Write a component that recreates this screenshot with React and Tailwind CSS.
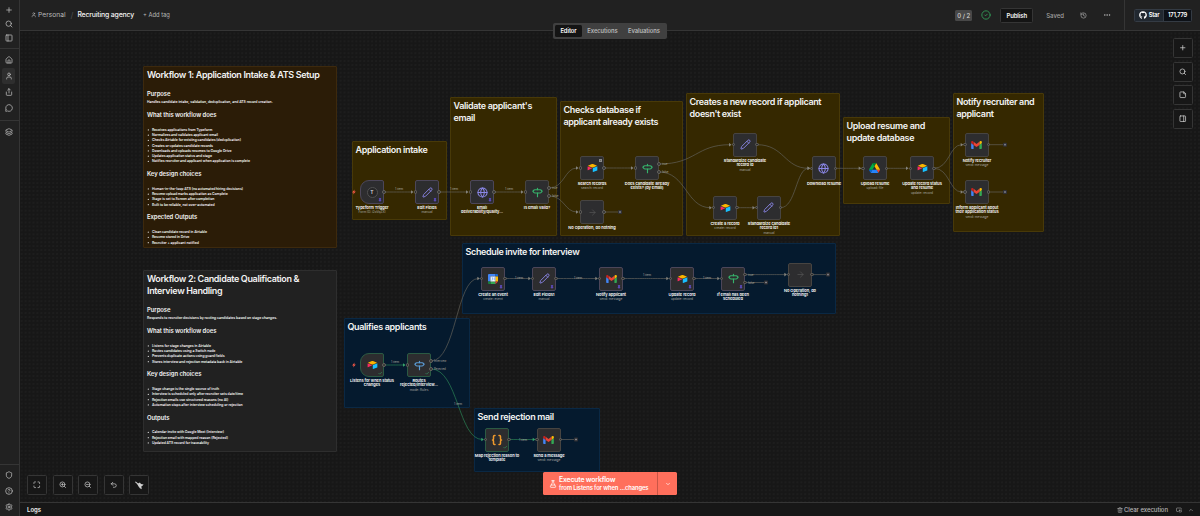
import React from "react";
import {
  Plus, Search, PanelLeft, PanelRight, House, User, Share, MessageCircle, Layers, Shield,
  CircleHelp, Settings, CircleCheck, History, Ellipsis, StickyNote, Maximize, ZoomIn,
  ZoomOut, Undo2, Trash2, ChevronDown, ChevronUp, FlaskConical, Globe, Pencil, Signpost,
  ArrowRight, Braces, Check, Pin, PictureInPicture2,
} from "lucide-react";
import { FaGithub } from "react-icons/fa";

/* ------------------ Data ------------------ */
const docs = [
  {
    title: "Workflow 1: Application Intake & ATS Setup",
    box: { left: 143, top: 65.5, width: 194, height: 182 },
    tone: "bg-[#2b1c07] border-[#3d290d]",
    purpose: "Handles candidate intake, validation, deduplication, and ATS record creation.",
    sections: [
      ["What this workflow does", [
        "Receives applications from Typeform",
        "Normalizes and validates applicant email",
        "Checks Airtable for existing candidates (deduplication)",
        "Creates or updates candidate records",
        "Downloads and uploads resumes to Google Drive",
        "Updates application status and stage",
        "Notifies recruiter and applicant when application is complete",
      ]],
      ["Key design choices", [
        "Human-in-the-loop ATS (no automated hiring decisions)",
        "Resume upload marks application as Complete",
        "Stage is set to Screen after completion",
        "Built to be reliable, not over-automated",
      ]],
      ["Expected Outputs", [
        "Clean candidate record in Airtable",
        "Resume stored in Drive",
        "Recruiter + applicant notified",
      ]],
    ],
  },
  {
    title: "Workflow 2: Candidate Qualification & Interview Handling",
    box: { left: 143, top: 270, width: 194, height: 182 },
    tone: "bg-[#212121] border-[#2e2e2e]",
    purpose: "Responds to recruiter decisions by routing candidates based on stage changes.",
    sections: [
      ["What this workflow does", [
        "Listens for stage changes in Airtable",
        "Routes candidates using a Switch node",
        "Prevents duplicate actions using guard fields",
        "Stores interview and rejection metadata back in Airtable",
      ]],
      ["Key design choices", [
        "Stage change is the single source of truth",
        "Interview is scheduled only after recruiter sets date/time",
        "Rejection emails use structured reasons (no AI)",
        "Automation stops after interview scheduling or rejection",
      ]],
      ["Outputs", [
        "Calendar invite with Google Meet (Interview)",
        "Rejection email with mapped reason (Rejected)",
        "Updated ATS record for traceability",
      ]],
    ],
  },
];

const YELLOW = "bg-[#352800] border-[#483908]";
const BLUE = "bg-[#051a2e] border-[#0a2844]";

const groups = [
  { title: ["Application intake"], x: 352, y: 140.5, w: 95, h: 79.5, tone: YELLOW },
  { title: ["Validate applicant's", "email"], x: 450, y: 97, w: 107, h: 139, tone: YELLOW },
  { title: ["Checks database if", "applicant already exists"], x: 560, y: 101, w: 122.5, h: 135, tone: YELLOW },
  { title: ["Creates a new record if applicant", "doesn't exist"], x: 686, y: 93, w: 154, h: 142.5, tone: YELLOW },
  { title: ["Upload resume and", "update database"], x: 843, y: 117, w: 107, h: 87, tone: YELLOW },
  { title: ["Notify recruiter and", "applicant"], x: 953, y: 93, w: 91, h: 139, tone: YELLOW },
  { title: ["Schedule invite for interview"], x: 462, y: 243, w: 374, h: 71, tone: BLUE },
  { title: ["Qualifies applicants"], x: 344, y: 317.5, w: 126, h: 90.5, tone: BLUE },
  { title: ["Send rejection mail"], x: 473.5, y: 408, w: 126.5, h: 64, tone: BLUE },
];

const nodes = [
  { x: 360, y: 180, icon: "typeform", label: ["Typeform Trigger"], sub: "Form ID: i2oVqZXl", trigger: true, pin: true },
  { x: 415, y: 180, icon: "pencil", label: ["Edit Fields"], sub: "manual", pin: true },
  { x: 470, y: 180, icon: "globe", label: ["Email", "deliverability/quality..."], pin: true },
  { x: 525, y: 180, icon: "sign", label: ["Is email valid?"], outs: ["true", "false"] },
  { x: 580, y: 156, icon: "airtable", label: ["Search records"], sub: "search: record", note: true },
  { x: 635, y: 156, icon: "sign", label: ["Does candidate already", "exists? (by email)"], outs: ["true", "false"] },
  { x: 580, y: 200, icon: "arrow", label: ["No Operation, do nothing"], end: 620 },
  { x: 733, y: 132.7, icon: "pencil", label: ["Standardize candidate", "record id"], sub: "manual" },
  { x: 713.3, y: 195.7, icon: "airtable", label: ["Create a record"], sub: "create: record" },
  { x: 756.5, y: 195.7, icon: "pencil", label: ["Standardize candidate", "record id1"], sub: "manual" },
  { x: 811.5, y: 156.3, icon: "globe", label: ["Download resume"] },
  { x: 862.7, y: 156.3, icon: "drive", label: ["Upload resume"], sub: "upload: file" },
  { x: 910, y: 156.3, icon: "airtable", label: ["Update record status", "and resume"], sub: "update: record" },
  { x: 964.7, y: 132.7, icon: "gmail", label: ["Notify recruiter"], sub: "send: message", end: 1005 },
  { x: 964.7, y: 180, icon: "gmail", label: ["Inform applicant about", "their application status"], sub: "send: message", end: 1005 },
  { x: 481.3, y: 266.5, icon: "calendar", label: ["Create an event"], sub: "create: event", pin: true },
  { x: 532.3, y: 266.5, icon: "pencil", label: ["Edit Fields1"], sub: "manual", pin: true },
  { x: 599.3, y: 266.5, icon: "gmail", label: ["Notify applicant"], sub: "send: message", pin: true },
  { x: 670.3, y: 266.5, icon: "airtable", label: ["Update record"], sub: "update: record", pin: true },
  { x: 721.3, y: 266.5, icon: "sign", label: ["If email has been", "scheduled"], outs: ["true", "false"], pin: true },
  { x: 788.3, y: 262.6, icon: "arrow", label: ["No Operation, do", "nothing1"], end: 828 },
  { x: 360, y: 353, icon: "airtable", label: ["Listens for when status", "changes"], trigger: true, done: true },
  { x: 407, y: 353, icon: "switch", label: ["Routes", "rejected/interview..."], sub: "mode: Rules", outs: ["Interview", "Rejected"], done: true },
  { x: 485.3, y: 427.5, icon: "code", label: ["Map rejection reason to", "template"], done: true },
  { x: 536.7, y: 427.5, icon: "gmail", label: ["Send a message"], sub: "send: message", end: 576 },
];

// [x1, y1, x2, y2, ran]
const wires = [
  [384, 192, 415, 192], [439, 192, 470, 192], [494, 192, 525, 192],
  [549, 188, 580, 168], [549, 196, 580, 212],
  [604, 168, 635, 168],
  [659, 164, 733, 144.7], [659, 172, 713.3, 207.7],
  [757, 144.7, 811.5, 168.3], [737.3, 207.7, 756.5, 207.7], [780.5, 207.7, 811.5, 168.3],
  [835.5, 168.3, 862.7, 168.3], [886.7, 168.3, 910, 168.3],
  [934, 168.3, 964.7, 144.7], [934, 168.3, 964.7, 192],
  [505.3, 278.5, 532.3, 278.5], [556.3, 278.5, 599.3, 278.5], [623.3, 278.5, 670.3, 278.5],
  [694.3, 278.5, 721.3, 278.5], [745.3, 274.6, 788.3, 274.6],
  [431, 361, 481.3, 278.5],
  [384, 365, 407, 365, true], [431, 369, 485.3, 439.5, true], [509.3, 439.5, 536.7, 439.5, true],
];

const itemLabels = [
  [399, 188.5], [454, 188.5], [509, 188.5], [519, 278], [578, 278], [647, 275],
  [707, 278], [395, 361.5], [458, 404], [523, 439.5],
];

/* ------------------ Icons ------------------ */
function Airtable() {
  return (
    <svg viewBox="0 0 200 170" className="w-[11px] h-[10px]">
      <path fill="#FCB400" d="M90.04 12.37 24.08 39.66c-3.67 1.52-3.63 6.73.06 8.19l66.24 26.27a24.58 24.58 0 0 0 18.12 0l66.23-26.27c3.7-1.46 3.73-6.67.07-8.19l-65.96-27.29a24.58 24.58 0 0 0-18.8 0" />
      <path fill="#18BFFF" d="M105.31 88.46v65.62c0 3.12 3.15 5.26 6.05 4.1l73.8-28.64a4.42 4.42 0 0 0 2.8-4.11V59.81c0-3.12-3.15-5.26-6.05-4.1l-73.8 28.64a4.42 4.42 0 0 0-2.8 4.11" />
      <path fill="#F82B60" d="m88.08 91.85-21.9 10.57-2.23 1.08-46.24 22.15c-2.93 1.42-6.67-.72-6.67-3.98V60.09c0-1.18.6-2.2 1.41-2.96.34-.34.72-.62 1.12-.84 1.1-.66 2.68-.84 4.02-.31l70.12 27.78c3.56 1.41 3.84 6.4.37 8.09" />
    </svg>
  );
}

function Gmail() {
  return (
    <svg viewBox="52 42 88 66" className="w-[11px] h-[8px]">
      <path fill="#4285f4" d="M58 108h14V74L52 59v43c0 3.32 2.69 6 6 6" />
      <path fill="#34a853" d="M120 108h14c3.32 0 6-2.69 6-6V59l-20 15" />
      <path fill="#fbbc04" d="M120 48v26l20-15v-8c0-7.42-8.47-11.65-14.4-7.2" />
      <path fill="#ea4335" d="M72 74V48l24 18 24-18v26L96 92" />
      <path fill="#c5221f" d="M52 51v8l20 15V48l-5.6-4.2c-5.94-4.45-14.4-.22-14.4 7.2" />
    </svg>
  );
}

function Drive() {
  return (
    <svg viewBox="0 0 87.3 78" className="w-[11px] h-[10px]">
      <path fill="#0066da" d="m6.6 66.85 3.85 6.65c.8 1.4 1.95 2.5 3.3 3.3L27.5 53H0c0 1.55.4 3.1 1.2 4.5z" />
      <path fill="#00ac47" d="M43.65 25 29.9 1.2c-1.35.8-2.5 1.9-3.3 3.3l-25.4 44A9.06 9.06 0 0 0 0 53h27.5z" />
      <path fill="#ea4335" d="M73.55 76.8c1.35-.8 2.5-1.9 3.3-3.3l1.6-2.75L86.1 57.5c.8-1.4 1.2-2.95 1.2-4.5H59.8l5.85 11.5z" />
      <path fill="#00832d" d="M43.65 25 57.4 1.2C56.05.4 54.5 0 52.9 0H34.4c-1.6 0-3.15.45-4.5 1.2z" />
      <path fill="#2684fc" d="M59.8 53H27.5L13.75 76.8c1.35.8 2.9 1.2 4.5 1.2h50.8c1.6 0 3.15-.45 4.5-1.2z" />
      <path fill="#ffba00" d="m73.4 26.5-12.7-22c-.8-1.4-1.95-2.5-3.3-3.3L43.65 25 59.8 53h27.45c0-1.55-.4-3.1-1.2-4.5z" />
    </svg>
  );
}

function Calendar() {
  return (
    <svg viewBox="0 0 20 20" className="w-[10px] h-[10px]">
      <path fill="#4285f4" d="M2 0h13v5H5v10H0V2Q0 0 2 0" />
      <path fill="#1967d2" d="M15 0h3q2 0 2 2v3h-5z" />
      <path fill="#fbbc04" d="M15 5h5v10h-5z" />
      <path fill="#34a853" d="M5 15h10v5H5z" />
      <path fill="#188038" d="M0 15h5v5H2q-2 0-2-2z" />
      <path fill="#ea4335" d="M15 15h5l-5 5z" />
      <path fill="#fff" d="M5 5h10v10H5z" />
      <path fill="none" stroke="#4285f4" strokeWidth="1.2" d="M7 7.8q2.8-1.4 2.4.8-.2 1-1.4 1.2 1.8.2 1.6 1.6-.6 1.8-2.8.6M11.4 8l1.4-.8v5.6" />
    </svg>
  );
}

function Broom() {
  return (
    <svg viewBox="0 0 24 24" className="w-[9px] h-[9px]">
      <path stroke="currentColor" strokeWidth="3" strokeLinecap="round" d="m2 3 7 6" />
      <path fill="currentColor" d="M6 8 13 4l3 4 7 1-4 4-2 1 1 8-5-3-4-5z" />
    </svg>
  );
}

function NodeIcon({ name }) {
  switch (name) {
    case "airtable": return <Airtable />;
    case "gmail": return <Gmail />;
    case "drive": return <Drive />;
    case "calendar": return <Calendar />;
    case "pencil": return <Pencil size={11} strokeWidth={2} className="text-[#8b87e8]" />;
    case "globe": return <Globe size={11} strokeWidth={2.2} className="text-[#8b87e8]" />;
    case "sign": return <Signpost size={11} strokeWidth={2.5} className="text-[#36b26b]" />;
    case "switch": return <Signpost size={11} strokeWidth={2.5} className="text-[#5b9bd5]" />;
    case "arrow": return <ArrowRight size={9} strokeWidth={1.8} className="text-[#565656]" />;
    case "code": return <Braces size={12} strokeWidth={3} className="text-[#f09a2c]" />;
    default:
      return (
        <span className="flex items-center justify-center w-[11px] h-[11px] rounded-full border-[0.5px] border-[#505050] bg-[#262627] text-[5px] leading-none font-semibold text-[#dcdcdc]">
          T
        </span>
      );
  }
}

/* ------------------ Canvas ------------------ */
// The tiny rotation keeps the glyphs from snapping to whole pixels at that zoom.
function Doc({ doc }) {
  return (
    <div className={`absolute border rounded-[1px] ${doc.tone}`} style={doc.box}>
      <div className="w-[768px] origin-top-left rotate-[0.03deg] scale-[0.25] pt-[6px] px-[12px] text-[#f2f2f2] font-semibold">
        <h1 className="text-[36px] leading-[48px] tracking-[-1.4px] max-w-[720px]">{doc.title}</h1>
        <h2 className="mt-[36px] text-[23.6px] leading-[32px] tracking-[-0.2px]">Purpose</h2>
        <p className="mt-[6px] mb-[27px] text-[13.8px] leading-[21px] tracking-[-0.12px] whitespace-nowrap">{doc.purpose}</p>
        {doc.sections.map(([heading, items]) => (
          <div key={heading} className="mb-[25px]">
            <h2 className="text-[23.6px] leading-[32px] tracking-[-0.2px]">{heading}</h2>
            <ul className="mt-[32px] pl-[20px]">
              {items.map((item) => (
                <li key={item} className="relative text-[13.8px] leading-[21px] tracking-[-0.2px] whitespace-nowrap">
                  <span className="absolute -left-[17px] top-[9px] w-[5px] h-[5px] rounded-full bg-[#d8d8d8]" />
                  {item}
                </li>
              ))}
            </ul>
          </div>
        ))}
      </div>
    </div>
  );
}

function Group({ g }) {
  return (
    <div
      className={`absolute border rounded-[1px] ${g.tone}`}
      style={{ left: g.x, top: g.y, width: g.w, height: g.h }}
    >
      <div className="w-max origin-top-left rotate-[0.03deg] scale-[0.25] pt-[5px] pl-[10px] text-[36px] leading-[48px] tracking-[-1.4px] font-semibold text-[#f2f2f2] whitespace-nowrap">
        {g.title.map((line) => <div key={line}>{line}</div>)}
      </div>
    </div>
  );
}

function wirePath([x1, y1, x2, y2]) {
  const mid = (x1 + x2) / 2;
  return `M${x1} ${y1}C${mid} ${y1} ${mid} ${y2} ${x2 - 3} ${y2}`;
}

function Wires() {
  return (
    <svg className="absolute inset-0" width="1200" height="516" fill="none">
      {wires.map((w, i) => (
        <g key={i}>
          <path d={wirePath(w)} stroke={w[4] ? "#2a8255" : "#626059"} strokeWidth="0.7" />
          <path d={`M${w[2] - 4} ${w[3] - 1.8}l2.6 1.8-2.6 1.8z`} fill={w[4] ? "#36a36b" : "#85837c"} />
        </g>
      ))}
      {nodes.filter((n) => n.end).map((n) => (
        <g key={n.label[0] + n.y}>
          <path d={`M${n.x + 24} ${n.y + 12}H${n.end - 2}`} stroke="#626059" strokeWidth="0.7" />
          <rect x={n.end - 2} y={n.y + 10} width="4" height="4" rx="0.8" fill="#303034" />
          <path d={`M${n.end - 1} ${n.y + 12}h2m-1 -1v2`} stroke="#a0a0a8" strokeWidth="0.6" />
        </g>
      ))}
      <path d="M745.3 282.5H764" stroke="#626059" strokeWidth="0.7" />
      <rect x="764" y="280.5" width="4" height="4" rx="0.8" fill="#303034" />
      <path d="M765 282.5h2m-1 -1v2" stroke="#a0a0a8" strokeWidth="0.6" />
      {[[354, 192], [354, 365]].map(([x, y]) => (
        <path key={y} d={`M${x + 0.6} ${y - 2.4}l-2.5 2.8h1.6l-.6 2.2 2.7-3h-1.6z`} fill="#ff5a48" />
      ))}
    </svg>
  );
}

function Node({ n }) {
  const border = n.done ? "border-[#2b5a43]" : n.pin ? "border-[#4c4659]" : "border-[#474441]";
  return (
    <div className="absolute w-[24px]" style={{ left: n.x, top: n.y }}>
      <div className={`relative flex items-center justify-center w-[24px] h-[24px] bg-[#2d2d2f] border ${border} ${n.trigger ? "rounded-[2px] rounded-l-[9px]" : "rounded-[2px]"}`}>
        <NodeIcon name={n.icon} />
        {n.pin && <Pin size={4} fill="#6a55d8" className="absolute right-[1px] bottom-[1px] text-[#6a55d8]" />}
        {n.done && <Check size={4.5} strokeWidth={3} className="absolute right-[1px] bottom-[1px] text-[#35a06a]" />}
        {n.note && <span className="absolute right-[1.5px] top-[1.5px] w-[3px] h-[3.5px] border-[0.5px] border-[#8a8a8a] bg-[#66665e]" />}
        {!n.trigger && <span className="absolute -left-[2.5px] top-[9.3px] w-[3.4px] h-[3.4px] rounded-full border border-[#66645f] bg-[#2d2d2f]" />}
        {n.outs ? (
          n.outs.map((out, i) => (
            <span key={out} className={`absolute -right-[2.5px] w-[3.4px] h-[3.4px] rounded-full border border-[#66645f] bg-[#2d2d2f] ${i ? "top-[13.3px]" : "top-[5.3px]"}`}>
              <span className="absolute left-[3.5px] -top-[1px] origin-top-left rotate-[0.03deg] scale-[0.25] text-[11.5px] leading-[14px] text-[#a5a39c]">{out}</span>
            </span>
          ))
        ) : (
          <span className="absolute -right-[2.5px] top-[9.3px] w-[3.4px] h-[3.4px] rounded-full border border-[#66645f] bg-[#2d2d2f]" />
        )}
      </div>
      <div className="flex flex-col items-center w-[240px] mt-[1.2px] -ml-[108px] origin-top rotate-[0.03deg] scale-[0.25] text-[16px] leading-[18.4px] tracking-[-0.2px] font-semibold text-white whitespace-nowrap">
        {n.label.map((line) => <span key={line}>{line}</span>)}
        {n.sub && <span className="mt-[2px] text-[12.8px] leading-[17px] tracking-normal font-normal text-[#a9a8a3]">{n.sub}</span>}
      </div>
    </div>
  );
}

function Canvas() {
  return (
    <div className="absolute inset-0 bg-[#171717] bg-[radial-gradient(circle,#1f1f1f_0.6px,transparent_1px)] bg-[size:3.94px_3.94px]">
      {docs.map((doc) => <Doc key={doc.title} doc={doc} />)}
      {groups.map((g) => <Group key={g.title[0]} g={g} />)}
      <Wires />
      {itemLabels.map(([x, y]) => (
        <span key={`${x}-${y}`} className="absolute -translate-x-1/2 -translate-y-1/2 rotate-[0.03deg] scale-[0.25] text-[12px] leading-[12px] text-[#aaa89f] whitespace-nowrap" style={{ left: x, top: y }}>
          1 item
        </span>
      ))}
      {nodes.map((n) => <Node key={n.label.join(" ") + n.x} n={n} />)}
    </div>
  );
}

/* ------------------ Chrome ------------------ */
function SideIcon({ icon: Icon, active }) {
  return (
    <div className={`flex items-center justify-center w-[13px] h-[16px] rounded-[2px] ${active ? "bg-[#2e2e2e]" : ""}`}>
      <Icon size={8} strokeWidth={2.2} />
    </div>
  );
}

function Sidebar() {
  return (
    <aside className="flex flex-col items-center w-[20px] h-[516px] pr-[2px] bg-[#212121] border-r border-[#353535] text-[#c0c0c0]">
      <div className="flex flex-col mt-[3px]">
        {[Plus, Search, PanelLeft].map((icon, i) => (
          <div key={i} className="h-[14px] flex items-center"><SideIcon icon={icon} /></div>
        ))}
      </div>
      <div className="self-stretch -mr-[2px] mt-[3px] h-px bg-[#353535]" />
      <div className="flex flex-col mt-[3px]">
        <SideIcon icon={House} />
        <SideIcon icon={User} active />
        <SideIcon icon={Share} />
        <SideIcon icon={MessageCircle} />
      </div>
      <div className="self-stretch -mr-[2px] mt-[4px] h-px bg-[#353535]" />
      <div className="mt-[3px]"><SideIcon icon={Layers} /></div>
      <div className="self-stretch -mr-[2px] mt-auto h-px bg-[#353535]" />
      <div className="flex flex-col mt-[2px] mb-[1px]">
        <SideIcon icon={Shield} />
        <SideIcon icon={CircleHelp} />
        <SideIcon icon={Settings} />
      </div>
    </aside>
  );
}

function Header() {
  return (
    <header className="flex items-center h-[31px] pl-[11px] pr-[8px] bg-[#212121] border-b border-[#353535] text-[#b8b8b8] whitespace-nowrap">
      <User size={5.5} strokeWidth={2.4} />
      <span className="ml-[1.5px] pt-[1px] text-[6.7px]">Personal</span>
      <span className="ml-[5px] text-[8px] text-[#505050]">/</span>
      <span className="ml-[4px] text-[6.9px] tracking-[-0.17px] font-medium text-[#f2f2f2]">Recruiting agency</span>
      <span className="ml-[9px] text-[5.8px]">+ Add tag</span>
      <div className="flex items-center ml-auto h-full">
        <span className="flex items-center justify-center w-[17px] h-[11px] rounded-[1.5px] bg-[#484848] text-[6px] font-medium text-[#dadada]">0 / 2</span>
        <CircleCheck size={10} strokeWidth={2} className="ml-[9px] text-[#34a35c]" />
        <button className="ml-[9px] w-[33px] h-[15px] rounded-[1.5px] border border-[#353535] bg-[#141414] text-[6px] tracking-[-0.1px] font-semibold text-[#f2f2f2]">Publish</button>
        <span className="ml-[13px] text-[6px] font-medium text-[#a0a0a0]">Saved</span>
        <History size={7} className="ml-[16px]" />
        <Ellipsis size={8} className="ml-[16px]" />
        <div className="ml-[13px] w-px h-full bg-[#353535]" />
        <div className="flex items-stretch ml-[9px] w-[58px] h-[13px] rounded-[1.5px] border border-[#343b44] bg-[#0d1117] text-[5.8px] tracking-[-0.2px] font-semibold text-white">
          <span className="flex items-center justify-center gap-[2px] w-[29px] bg-[#212830] border-r border-[#343b44]">
            <FaGithub size={8} />Star
          </span>
          <span className="flex items-center justify-center flex-1">171,779</span>
        </div>
      </div>
    </header>
  );
}

const toolButton = "flex items-center justify-center w-[20px] h-[20px] rounded-[1.5px] border border-[#353535] bg-[#171717] text-[#d0d0d0]";

export default function App() {
  return (
    <div className="relative w-[1200px] h-[516px] overflow-hidden font-['Inter',sans-serif]">
      <Canvas />
      <div className="relative flex">
        <Sidebar />
        <div className="flex flex-col flex-1 h-[516px]">
          <Header />
          <main className="relative flex-1">
            {/* view switcher sits over the header border */}
            <div className="absolute left-[533px] -top-[8px] flex items-center w-[114px] h-[16px] px-[2px] rounded-[2px] bg-[#404040] text-[5.8px] tracking-[-0.05px] font-semibold text-[#b8b8b8]">
              <span className="flex items-center justify-center w-[27px] h-[12px] rounded-[1.5px] bg-[#141414] text-white">Editor</span>
              <span className="w-[41px] text-center">Executions</span>
              <span className="flex-1 text-center">Evaluations</span>
            </div>
            <div className="absolute right-[7px] top-[7px] flex flex-col gap-[3.5px]">
              {[Plus, Search, StickyNote, PanelRight].map((Icon, i) => (
                <button key={i} className={toolButton}><Icon size={7.5} strokeWidth={2.4} /></button>
              ))}
            </div>
            <div className="absolute left-[7px] bottom-[7px] flex gap-[5.6px]">
              {[Maximize, ZoomIn, ZoomOut, Undo2].map((Icon, i) => (
                <button key={i} className={toolButton}><Icon size={7.5} strokeWidth={2.2} /></button>
              ))}
              <button className={toolButton}><Broom /></button>
            </div>
            <div className="absolute left-[523px] bottom-[7px] flex w-[134px] h-[23px] rounded-[1.5px] bg-[#ff6f5c] text-white">
              <div className="flex items-center w-[115px] pl-[6px] border-r border-[#c95646]">
                <FlaskConical size={8} strokeWidth={2.2} />
                <div className="ml-[2px] leading-[8px] font-semibold whitespace-nowrap">
                  <div className="text-[6.9px] tracking-[-0.2px]">Execute workflow</div>
                  <div className="text-[5.9px] tracking-[-0.13px]">from Listens for when ...changes</div>
                </div>
              </div>
              <div className="flex flex-1 items-center justify-center"><ChevronDown size={6} strokeWidth={2.6} /></div>
            </div>
          </main>
          <footer className="flex items-center h-[14px] pl-[7px] pr-[6px] bg-[#171717] border-t border-[#353535] text-[6px] text-[#b8b8b8]">
            <span className="font-semibold text-[#f0f0f0]">Logs</span>
            <Trash2 size={6} className="ml-auto" />
            <span className="ml-[1px] tracking-[-0.05px] font-medium">Clear execution</span>
            <PictureInPicture2 size={6} className="ml-[8px]" />
            <ChevronUp size={6} className="ml-[6px]" />
          </footer>
        </div>
      </div>
    </div>
  );
}
